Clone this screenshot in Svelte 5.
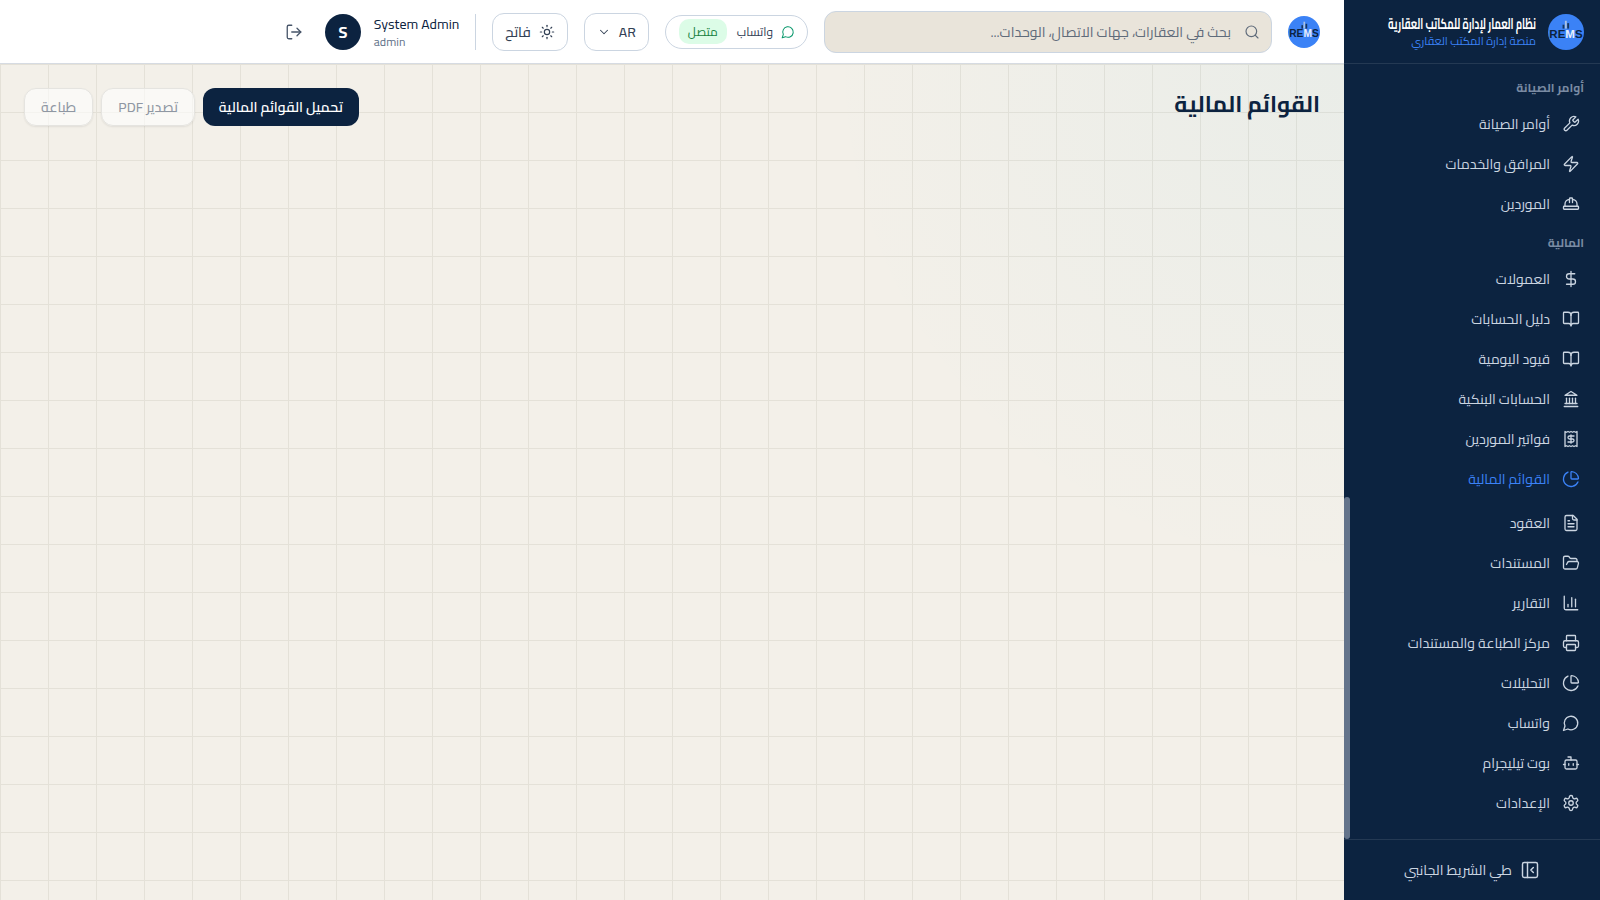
<script>
  const icons = {
    wrench: ['M14.7 6.3a1 1 0 0 0 0 1.4l1.6 1.6a1 1 0 0 0 1.4 0l3.77-3.77a6 6 0 0 1-7.94 7.94l-6.91 6.91a2.12 2.12 0 0 1-3-3l6.91-6.91a6 6 0 0 1 7.94-7.94l-3.76 3.76z'],
    zap: ['M4 14a1 1 0 0 1-.78-1.63l9.9-10.2a.5.5 0 0 1 .86.46l-1.92 6.02A1 1 0 0 0 13 10h7a1 1 0 0 1 .78 1.63l-9.9 10.2a.5.5 0 0 1-.86-.46l1.92-6.02A1 1 0 0 0 11 14z'],
    hat: ['M10 10V5a1 1 0 0 1 1-1h2a1 1 0 0 1 1 1v5', 'M14 6a6 6 0 0 1 6 6v3', 'M4 15v-3a6 6 0 0 1 6-6', 'M3 15h18a1 1 0 0 1 1 1v2a1 1 0 0 1-1 1H3a1 1 0 0 1-1-1v-2a1 1 0 0 1 1-1z'],
    dollar: ['M12 2v20', 'M17 5H9.5a3.5 3.5 0 0 0 0 7h5a3.5 3.5 0 0 1 0 7H6'],
    book: ['M12 7v14', 'M3 18a1 1 0 0 1-1-1V4a1 1 0 0 1 1-1h5a4 4 0 0 1 4 4 4 4 0 0 1 4-4h5a1 1 0 0 1 1 1v13a1 1 0 0 1-1 1h-6a3 3 0 0 0-3 3 3 3 0 0 0-3-3z'],
    bank: ['M3 22h18', 'M6 18v-7', 'M10 18v-7', 'M14 18v-7', 'M18 18v-7', 'M12 2l8 5H4z', 'M4 18h16'],
    receipt: ['M4 2v20l2-1 2 1 2-1 2 1 2-1 2 1 2-1 2 1V2l-2 1-2-1-2 1-2-1-2 1-2-1-2 1Z', 'M16 8h-6a2 2 0 1 0 0 4h4a2 2 0 1 1 0 4H8', 'M12 17.5v-11'],
    pie: ['M21 12c.552 0 1.005-.449.95-.998a10 10 0 0 0-8.953-8.951c-.55-.055-.998.398-.998.95v8a1 1 0 0 0 1 1z', 'M21.21 15.89A10 10 0 1 1 8 2.83'],
    file: ['M15 2H6a2 2 0 0 0-2 2v16a2 2 0 0 0 2 2h12a2 2 0 0 0 2-2V7Z', 'M14 2v4a2 2 0 0 0 2 2h4', 'M10 9H8', 'M16 13H8', 'M16 17H8'],
    folder: ['m6 14 1.5-2.9A2 2 0 0 1 9.24 10H20a2 2 0 0 1 1.94 2.5l-1.54 6a2 2 0 0 1-1.95 1.5H4a2 2 0 0 1-2-2V5a2 2 0 0 1 2-2h3.9a2 2 0 0 1 1.69.9l.81 1.2a2 2 0 0 0 1.67.9H18a2 2 0 0 1 2 2v2'],
    chart: ['M3 3v16a2 2 0 0 0 2 2h16', 'M18 17V7', 'M13 17V5', 'M8 17v-3'],
    printer: ['M6 18H4a2 2 0 0 1-2-2v-5a2 2 0 0 1 2-2h16a2 2 0 0 1 2 2v5a2 2 0 0 1-2 2h-2', 'M6 9V3a1 1 0 0 1 1-1h10a1 1 0 0 1 1 1v6', 'M7 14h10a1 1 0 0 1 1 1v6a1 1 0 0 1-1 1H7a1 1 0 0 1-1-1v-6a1 1 0 0 1 1-1z'],
    chat: ['M7.9 20A9 9 0 1 0 4 16.1L2 22Z'],
    bot: ['M12 8V4H8', 'M6 8h12a2 2 0 0 1 2 2v8a2 2 0 0 1-2 2H6a2 2 0 0 1-2-2v-8a2 2 0 0 1 2-2z', 'M2 14h2', 'M20 14h2', 'M15 13v2', 'M9 13v2'],
    gear: ['M12.22 2h-.44a2 2 0 0 0-2 2v.18a2 2 0 0 1-1 1.73l-.43.25a2 2 0 0 1-2 0l-.15-.08a2 2 0 0 0-2.73.73l-.22.38a2 2 0 0 0 .73 2.73l.15.1a2 2 0 0 1 1 1.72v.51a2 2 0 0 1-1 1.74l-.15.09a2 2 0 0 0-.73 2.73l.22.38a2 2 0 0 0 2.73.73l.15-.08a2 2 0 0 1 2 0l.43.25a2 2 0 0 1 1 1.73V20a2 2 0 0 0 2 2h.44a2 2 0 0 0 2-2v-.18a2 2 0 0 1 1-1.73l.43-.25a2 2 0 0 1 2 0l.15.08a2 2 0 0 0 2.73-.73l.22-.39a2 2 0 0 0-.73-2.73l-.15-.08a2 2 0 0 1-1-1.74v-.5a2 2 0 0 1 1-1.74l.15-.09a2 2 0 0 0 .73-2.73l-.22-.38a2 2 0 0 0-2.73-.73l-.15.08a2 2 0 0 1-2 0l-.43-.25a2 2 0 0 1-1-1.73V4a2 2 0 0 0-2-2z', 'M15 12a3 3 0 1 1-6 0 3 3 0 0 1 6 0z'],
    panel: ['M5 3h14a2 2 0 0 1 2 2v14a2 2 0 0 1-2 2H5a2 2 0 0 1-2-2V5a2 2 0 0 1 2-2z', 'M9 3v18', 'm16 15-3-3 3-3'],
    search: ['m21 21-4.34-4.34', 'M19 11a8 8 0 1 1-16 0 8 8 0 0 1 16 0z'],
    chevron: ['m6 9 6 6 6-6'],
    sun: ['M16 12a4 4 0 1 1-8 0 4 4 0 0 1 8 0z', 'M12 2v2', 'M12 20v2', 'm4.93 4.93 1.41 1.41', 'm17.66 17.66 1.41 1.41', 'M2 12h2', 'M20 12h2', 'm6.34 17.66-1.41 1.41', 'm19.07 4.93-1.41 1.41'],
    logout: ['M9 21H5a2 2 0 0 1-2-2V5a2 2 0 0 1 2-2h4', 'm16 17 5-5-5-5', 'M21 12H9']
  };

  const groups = [
    { label: 'أوامر الصيانة', items: [
      { icon: 'wrench', text: 'أوامر الصيانة' },
      { icon: 'zap', text: 'المرافق والخدمات' },
      { icon: 'hat', text: 'الموردين' }
    ] },
    { label: 'المالية', items: [
      { icon: 'dollar', text: 'العمولات' },
      { icon: 'book', text: 'دليل الحسابات' },
      { icon: 'book', text: 'قيود اليومية' },
      { icon: 'bank', text: 'الحسابات البنكية' },
      { icon: 'receipt', text: 'فواتير الموردين' },
      { icon: 'pie', text: 'القوائم المالية', active: true }
    ] },
    { items: [
      { icon: 'file', text: 'العقود' },
      { icon: 'folder', text: 'المستندات' },
      { icon: 'chart', text: 'التقارير' },
      { icon: 'printer', text: 'مركز الطباعة والمستندات' },
      { icon: 'pie', text: 'التحليلات' },
      { icon: 'chat', text: 'واتساب' },
      { icon: 'bot', text: 'بوت تيليجرام' },
      { icon: 'gear', text: 'الإعدادات' }
    ] }
  ];
</script>

{#snippet icon(name, size)}
  <svg class="ico" width={size} height={size} viewBox="0 0 24 24" fill="none" stroke="currentColor" stroke-width="1.75" stroke-linecap="round" stroke-linejoin="round">
    {#each icons[name] as d}<path {d} />{/each}
  </svg>
{/snippet}

{#snippet logo(size)}
  <div class="logo" style="width:{size}px;height:{size}px;font-size:{size * 0.32}px">
    <svg class="logo-city" viewBox="0 0 12 12" width={size * 0.26} height={size * 0.26}>
      <rect x="2" y="6" width="2.4" height="5" fill="#16375f" />
      <rect x="5" y="1" width="2.4" height="10" fill="#a9c2e4" />
      <rect x="8" y="4" width="2.4" height="7" fill="#16375f" />
    </svg>
    <span class="logo-text">RE<b>M</b>S</span>
  </div>
{/snippet}

<div class="app" dir="rtl">
  <aside class="sidebar">
    <div class="brand">
      {@render logo(36)}
      <div class="brand-text">
        <div class="brand-title">نظام العمار لإدارة للمكاتب العقارية</div>
        <div class="brand-sub">منصة إدارة المكتب العقاري</div>
      </div>
    </div>
    <nav class="nav">
      {#each groups as g}
        <div class="group">
          {#if g.label}<div class="group-label">{g.label}</div>{/if}
          {#each g.items as item}
            <a class="item" class:active={item.active} href="#top">
              {@render icon(item.icon, 18)}
              <span>{item.text}</span>
            </a>
          {/each}
        </div>
      {/each}
      <div class="thumb"></div>
    </nav>
    <div class="collapse">
      {@render icon('panel', 20)}
      <span>طي الشريط الجانبي</span>
    </div>
  </aside>

  <div class="main">
    <header class="topbar">
      {@render logo(32)}
      <div class="search">
        {@render icon('search', 16)}
        <span>بحث في العقارات، جهات الاتصال، الوحدات...</span>
      </div>
      <div class="wa">
        <span class="wa-icon">{@render icon('chat', 14)}</span>
        <span class="wa-name">واتساب</span>
        <span class="wa-status">متصل</span>
      </div>
      <button class="tb-btn lang">AR {@render icon('chevron', 14)}</button>
      <button class="tb-btn theme">{@render icon('sun', 16)} فاتح</button>
      <div class="divider"></div>
      <div class="user">
        <div class="user-text">
          <div class="user-name">System Admin</div>
          <div class="user-role">admin</div>
        </div>
        <div class="avatar">S</div>
      </div>
      <button class="logout">{@render icon('logout', 18)}</button>
    </header>

    <main class="content">
      <h1>القوائم المالية</h1>
      <div class="actions">
        <button class="btn primary">تحميل القوائم المالية</button>
        <button class="btn ghost">تصدير PDF</button>
        <button class="btn ghost">طباعة</button>
      </div>
    </main>
  </div>
</div>

<style>
  :global(body) {
    margin: 0;
    font-family: "Cairo", "Noto Sans", sans-serif;
  }
  .app {
    display: flex;
    width: 1600px;
    height: 900px;
    overflow: hidden;
    background: #f3f0e9;
  }
  .ico {
    display: block;
    flex-shrink: 0;
  }

  .sidebar {
    width: 256px;
    flex-shrink: 0;
    display: flex;
    flex-direction: column;
    background: #0c2340;
    color: #cbd5e1;
  }
  .brand {
    height: 64px;
    box-sizing: border-box;
    display: flex;
    align-items: center;
    gap: 12px;
    padding: 0 16px;
    border-bottom: 1px solid rgba(255, 255, 255, 0.1);
  }
  .logo {
    position: relative;
    border-radius: 50%;
    background: #3b82f6;
    flex-shrink: 0;
    display: flex;
    align-items: center;
    justify-content: center;
    direction: ltr;
  }
  .logo-city {
    position: absolute;
    top: 18%;
    left: 36%;
  }
  .logo-text {
    font-family: "Liberation Sans", sans-serif;
    font-weight: 700;
    color: #0c2340;
    margin-top: 4px;
  }
  .logo-text b {
    color: #e8f0fc;
  }
  .brand-text {
    min-width: 0;
  }
  .brand-title {
    font-size: 15px;
    font-weight: 700;
    color: #fff;
    line-height: 18px;
    white-space: nowrap;
    transform: scaleX(0.64);
    transform-origin: right center;
  }
  .brand-sub {
    font-size: 11.2px;
    line-height: 16px;
    color: #3b82f6;
  }

  .nav {
    position: relative;
    flex: 1;
    padding: 16px 16px 0;
  }
  .group {
    margin-bottom: 4px;
  }
  .group:first-child {
    margin-bottom: 11px;
  }
  .group-label {
    font-size: 12px;
    font-weight: 700;
    color: #7a8ba3;
    line-height: 16px;
    margin-bottom: 8px;
  }
  .item {
    display: flex;
    align-items: center;
    gap: 12px;
    height: 40px;
    padding: 0 4px;
    font-size: 14px;
    color: #cbd5e1;
    text-decoration: none;
  }
  .item.active {
    color: #3b82f6;
  }
  .thumb {
    position: absolute;
    left: 0;
    top: 433px;
    width: 6px;
    height: 342px;
    border-radius: 3px;
    background: #64748b;
  }
  .collapse {
    height: 61px;
    box-sizing: border-box;
    display: flex;
    align-items: center;
    justify-content: center;
    gap: 8px;
    border-top: 1px solid rgba(255, 255, 255, 0.1);
    font-size: 14px;
    color: #cbd5e1;
  }

  .main {
    flex: 1;
    min-width: 0;
    display: flex;
    flex-direction: column;
  }
  .topbar {
    height: 64px;
    box-sizing: border-box;
    flex-shrink: 0;
    display: flex;
    align-items: center;
    gap: 16px;
    padding: 0 24px;
    background: #fff;
    border-bottom: 1px solid #d6dbe2;
    box-shadow: 0 1px 2px rgba(0, 0, 0, 0.05);
  }
  .search {
    width: 448px;
    height: 42px;
    box-sizing: border-box;
    display: flex;
    align-items: center;
    gap: 13px;
    padding: 0 11px 0 12px;
    background: #e9e4da;
    border: 1px solid #cbd5e1;
    border-radius: 12px;
    font-size: 14px;
    color: #5f6b7a;
  }
  .wa {
    height: 34px;
    box-sizing: border-box;
    display: flex;
    align-items: center;
    gap: 8px;
    padding: 0 12px 0 13px;
    border: 1px solid #cbd5e1;
    border-radius: 17px;
    font-size: 12px;
    color: #334155;
  }
  .wa-icon {
    color: #059669;
  }
  .wa-status {
    margin-right: 2px;
    padding: 1px 9px;
    border-radius: 10px;
    background: #dcfce7;
    color: #15803d;
  }
  .tb-btn {
    height: 38px;
    box-sizing: border-box;
    display: flex;
    align-items: center;
    gap: 8px;
    padding: 0 12px;
    background: #fff;
    border: 1px solid #cbd5e1;
    border-radius: 12px;
    font: inherit;
    font-size: 14px;
    font-weight: 500;
    color: #334155;
  }
  .divider {
    width: 1px;
    height: 36px;
    background: #cbd5e1;
  }
  .user {
    display: flex;
    align-items: center;
    gap: 13px;
  }
  .user-text {
    text-align: right;
  }
  .user-name {
    font-size: 14px;
    line-height: 20px;
    color: #0c2340;
  }
  .user-role {
    font-size: 12px;
    line-height: 16px;
    color: #64748b;
    text-align: left;
  }
  .avatar {
    width: 36px;
    height: 36px;
    border-radius: 50%;
    background: #0c2340;
    color: #fff;
    display: flex;
    align-items: center;
    justify-content: center;
    font-size: 16px;
    font-weight: 700;
  }
  .logout {
    margin-right: -2px;
    padding: 8px;
    background: none;
    border: none;
    color: #475569;
  }

  .content {
    flex: 1;
    display: flex;
    justify-content: space-between;
    align-items: flex-start;
    padding: 24px;
    background-color: #f3f0e9;
    background-image:
      radial-gradient(circle at 100% 0, rgba(60, 180, 220, 0.05), transparent 520px),
      linear-gradient(#e4e1d8 1px, transparent 1px),
      linear-gradient(90deg, #e4e1d8 1px, transparent 1px);
    background-size: 100% 100%, 48px 48px, 48px 48px;
  }
  h1 {
    margin: 0;
    font-size: 22.5px;
    line-height: 32px;
    font-weight: 700;
    color: #0c2340;
  }
  .actions {
    display: flex;
    gap: 8px;
  }
  .btn {
    height: 38px;
    box-sizing: border-box;
    padding: 0 16px;
    border-radius: 12px;
    font: inherit;
    font-size: 14px;
    font-weight: 500;
    border: none;
  }
  .primary {
    background: #0c2340;
    color: #fff;
    font-weight: 600;
  }
  .ghost {
    background: rgba(255, 255, 255, 0.6);
    color: #8f97a3;
    border: 1px solid #e5e4e0;
    box-shadow: 0 1px 2px rgba(0, 0, 0, 0.08);
  }
</style>
